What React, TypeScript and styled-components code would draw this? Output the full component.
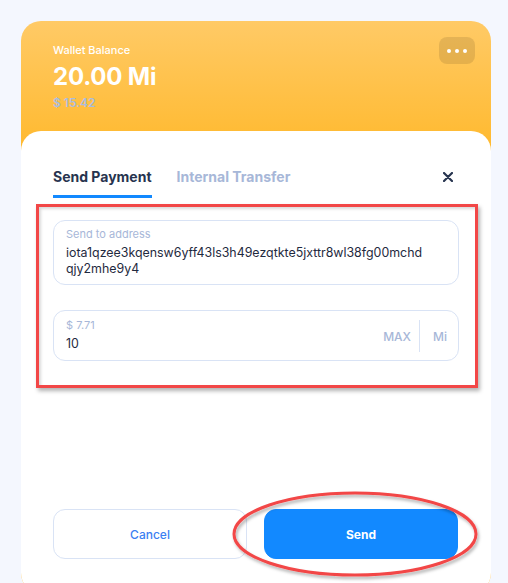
import React from "react";
import styled, { createGlobalStyle } from "styled-components";

const Global = createGlobalStyle`
  html, body { margin: 0; padding: 0; height: 583px; overflow: hidden; background: #f4f7fe; }
  body { font-family: Inter, "Noto Sans", sans-serif; }
  * { box-sizing: border-box; }
`;

const Page = styled.div`
  position: relative;
  padding: 21px 0 0 21px;
`;

const Card = styled.div`
  width: 470px;
  height: 572px;
  border-radius: 20px;
  overflow: hidden;
  background: linear-gradient(180deg, #ffca66 0px, #ffb92e 130px);
  display: flex;
  flex-direction: column;
`;

const Header = styled.div`
  height: 110px;
  display: flex;
  justify-content: space-between;
  align-items: flex-start;
  padding: 0 16px 0 32px;
  flex-shrink: 0;
`;

const Balance = styled.div`
  padding-top: 22px;
  display: flex;
  flex-direction: column;
`;

const BalanceLabel = styled.div`
  font-size: 11px;
  line-height: 14px;
  font-weight: 500;
  color: #ffffff;
`;

const BalanceAmount = styled.div`
  margin-top: 6px;
  font-size: 24px;
  line-height: 28px;
  font-weight: 700;
  color: #ffffff;
  letter-spacing: -0.2px;
`;

const BalanceFiat = styled.div`
  margin-top: 4px;
  font-size: 12px;
  line-height: 16px;
  font-weight: 600;
  color: #a9bde0;
`;

const DotsButton = styled.button`
  margin-top: 16px;
  width: 36px;
  height: 27px;
  border: none;
  border-radius: 8px;
  background: rgba(0, 0, 0, 0.1);
  display: flex;
  align-items: center;
  justify-content: center;
  gap: 4px;
  padding: 0;
`;

const Dot = styled.span`
  width: 4px;
  height: 4px;
  border-radius: 50%;
  background: #ffffff;
`;

const Panel = styled.div`
  flex: 1;
  background: #ffffff;
  border-radius: 20px 20px 0 0;
  padding: 0 32px 34px 32px;
  display: flex;
  flex-direction: column;
`;

const TabRow = styled.div`
  display: flex;
  align-items: flex-start;
  gap: 25px;
  padding-top: 36px;
`;

const Tab = styled.div<{ $active?: boolean }>`
  font-size: 14px;
  line-height: 20px;
  font-weight: 700;
  color: ${(p) => (p.$active ? "#27344f" : "#a7b7d8")};
  padding-bottom: 8px;
  border-bottom: 3px solid ${(p) => (p.$active ? "#1289ff" : "transparent")};
`;

const Close = styled.div`
  margin-left: auto;
  margin-right: 6px;
  margin-top: 5px;
  width: 10px;
  height: 10px;
  display: flex;
`;

const Field = styled.div`
  border: 1px solid #d9e3f5;
  border-radius: 12px;
  padding: 6px 12px 7px 12px;
  display: flex;
  align-items: center;
`;

const AddressField = styled(Field)`
  margin-top: 22px;
`;

const AmountField = styled(Field)`
  margin-top: 25px;
  padding-right: 11px;
  padding-bottom: 8px;
`;

const FieldBody = styled.div`
  flex: 1;
  display: flex;
  flex-direction: column;
  min-width: 0;
`;

const FieldLabel = styled.div`
  font-size: 11px;
  line-height: 14px;
  color: #a7b7d8;
  margin-bottom: 4px;
`;

const FieldValue = styled.div`
  font-size: 12.4px;
  line-height: 16px;
  color: #1f2a40;
  word-break: break-all;
  max-width: 362px;
`;

const Unit = styled.div`
  display: flex;
  align-items: center;
  align-self: stretch;
  margin: 3px 0 0 0;
`;

const UnitText = styled.span`
  font-size: 12px;
  font-weight: 500;
  color: #a7b7d8;
`;

const Divider = styled.span`
  width: 1px;
  height: 32px;
  background: #d9e3f5;
  margin: 0 13px 0 8px;
`;

const Actions = styled.div`
  margin-top: auto;
  display: grid;
  grid-template-columns: 194px 194px;
  gap: 17px;
`;

const Button = styled.button<{ $primary?: boolean }>`
  height: 50px;
  border-radius: 12px;
  font-family: Inter, "Noto Sans", sans-serif;
  font-size: 12px;
  font-weight: ${(p) => (p.$primary ? 700 : 500)};
  color: ${(p) => (p.$primary ? "#ffffff" : "#3b7ff2")};
  background: ${(p) => (p.$primary ? "#1289ff" : "#ffffff")};
  border: 1px solid ${(p) => (p.$primary ? "#1289ff" : "#d9e3f5")};
`;

const RedBox = styled.div`
  position: absolute;
  left: 36px;
  top: 204px;
  width: 442px;
  height: 184px;
  border: 3px solid #f24747;
  box-shadow: 2px 3px 4px rgba(0, 0, 0, 0.3), inset 2px 2px 3px rgba(0, 0, 0, 0.15);
  pointer-events: none;
`;

const Ring = styled.svg`
  position: absolute;
  left: 228px;
  top: 488px;
  overflow: visible;
  pointer-events: none;
`;

export default function App() {
  return (
    <>
      <Global />
      <Page>
        <Card>
          <Header>
            <Balance>
              <BalanceLabel>Wallet Balance</BalanceLabel>
              <BalanceAmount>20.00 Mi</BalanceAmount>
              <BalanceFiat>$ 15.42</BalanceFiat>
            </Balance>
            <DotsButton>
              <Dot />
              <Dot />
              <Dot />
            </DotsButton>
          </Header>
          <Panel>
            <TabRow>
              <Tab $active>Send Payment</Tab>
              <Tab>Internal Transfer</Tab>
              <Close>
                <svg width="10" height="10" viewBox="0 0 10 10">
                  <path d="M1 1 L9 9 M9 1 L1 9" stroke="#27344f" strokeWidth="2.2" strokeLinecap="round" />
                </svg>
              </Close>
            </TabRow>
            <AddressField>
              <FieldBody>
                <FieldLabel>Send to address</FieldLabel>
                <FieldValue>iota1qzee3kqensw6yff43ls3h49ezqtkte5jxttr8wl38fg00mchdqjy2mhe9y4</FieldValue>
              </FieldBody>
            </AddressField>
            <AmountField>
              <FieldBody>
                <FieldLabel>$ 7.71</FieldLabel>
                <FieldValue>10</FieldValue>
              </FieldBody>
              <Unit>
                <UnitText>MAX</UnitText>
                <Divider />
                <UnitText>Mi</UnitText>
              </Unit>
            </AmountField>
            <Actions>
              <Button>Cancel</Button>
              <Button $primary>Send</Button>
            </Actions>
          </Panel>
        </Card>
        <RedBox />
        <Ring width="254" height="94" viewBox="0 0 254 94">
          <defs>
            <filter id="sh" x="-10%" y="-20%" width="120%" height="140%">
              <feDropShadow dx="1.5" dy="2.5" stdDeviation="1.5" floodColor="#000" floodOpacity="0.3" />
            </filter>
          </defs>
          <ellipse cx="127" cy="46" rx="121" ry="41" fill="none" stroke="#f24747" strokeWidth="3" filter="url(#sh)" />
        </Ring>
      </Page>
    </>
  );
}
